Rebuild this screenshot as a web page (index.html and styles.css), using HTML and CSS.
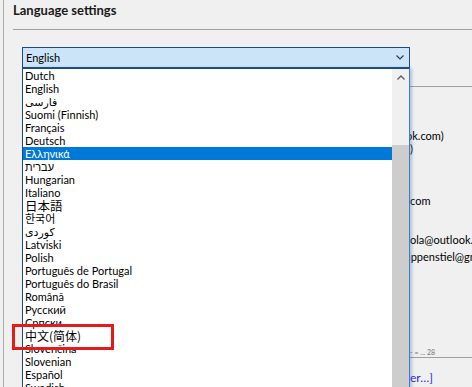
FILE: index.html
```html
<!DOCTYPE html>
<html lang="en">
<head>
    <meta charset="UTF-8">
    <title>Language settings</title>
    <link rel="stylesheet" href="styles.css">
</head>
<body>
<div class="page">
    <div class="group">
        <div class="group-title">Language settings</div>
        <div class="rule"></div>
        <div class="combo">
            <span>English</span>
            <svg class="chev" width="8" height="5" viewBox="0 0 8 5"><path d="M0.5 0.5 L4 4 L7.5 0.5" fill="none" stroke="#333" stroke-width="1.1"/></svg>
        </div>

        <!-- the page behind the open dropdown -->
        <div class="details">
            <div class="rule"></div>
            <div class="detail mail-1">ok.com)</div>
            <div class="detail paren">)</div>
            <div class="detail site">com</div>
            <div class="detail mail-2">ola@outlook.com</div>
            <div class="detail mail-3">ippenstiel@gmail.com</div>
            <div class="detail tiny">- = ... 28</div>
            <div class="rule thin"></div>
            <div class="detail more">er…]</div>
        </div>
    </div>

    <div class="dropdown">
        <ul class="options">
            <li>Dutch</li>
            <li>English</li>
            <li>فارسی</li>
            <li>Suomi (Finnish)</li>
            <li>Français</li>
            <li>Deutsch</li>
            <li class="selected">Ελληνικά</li>
            <li>עברית</li>
            <li>Hungarian</li>
            <li>Italiano</li>
            <li class="jp">日本語</li>
            <li class="kr">한국어</li>
            <li>کوردی</li>
            <li>Latviski</li>
            <li>Polish</li>
            <li>Português de Portugal</li>
            <li>Português do Brasil</li>
            <li>Română</li>
            <li>Русский</li>
            <li>Српски</li>
            <li class="sc">中文(简体)</li>
            <li>Slovenčina</li>
            <li>Slovenian</li>
            <li>Español</li>
            <li>Swedish</li>
        </ul>
        <div class="scrollbar">
            <div class="scroll-btn">
                <svg width="8" height="5" viewBox="0 0 8 5"><path d="M0.5 4.5 L4 1 L7.5 4.5" fill="none" stroke="#606060" stroke-width="1.4"/></svg>
            </div>
            <div class="thumb"></div>
        </div>
    </div>

    <div class="callout"></div>
</div>
</body>
</html>
```
FILE: styles.css
```css
body {
    margin: 0;
    background: #f0f0f0;
    font-family: Lato, "Liberation Sans", "DejaVu Sans", sans-serif;
    color: #000;
    overflow: hidden;
}
.page {
    position: relative;
    height: 387px;
    padding-left: 3px;
    overflow: hidden;
}
.group {
    height: 387px;
    border-left: 1px solid #acacac;
    padding-left: 9px;
}
.group-title {
    font-size: 13px;
    font-weight: bold;
    line-height: 18px;
    padding-top: 1px;
    color: #1a1a1a;
}
.rule {
    height: 1px;
    margin-top: 10px;
    background: #a0a0a0;
}
.combo {
    box-sizing: border-box;
    width: 388px;
    height: 21px;
    margin-top: 17px;
    margin-left: 9px;
    padding: 0 5px 0 3px;
    display: flex;
    align-items: center;
    justify-content: space-between;
    background: #cce4f7;
    border: 1px solid #1d4a7e;
    font-size: 11px;
}

/* content hidden behind the list */
.details {
    margin-left: 393px;
    font-size: 11px;
    line-height: 13px;
    white-space: nowrap;
}
.details .rule {
    margin-top: 18px;
}
.detail {
    padding-left: 4px;
}
.mail-1 { margin-top: 42px; padding-left: 0; }
.site { margin-top: 39px; }
.mail-2 { margin-top: 26px; }
.mail-3 { margin-top: 4px; padding-left: 2px; }
.tiny {
    margin-top: 85px;
    font-size: 7px;
    line-height: 8px;
    color: #777;
}
.details .rule.thin {
    margin-top: 1px;
}
.more {
    margin-top: 13px;
    font-size: 12px;
    line-height: 14px;
    color: #2a2ad0;
}

.dropdown {
    position: absolute;
    z-index: 1;
    left: 22px;
    top: 68px;
    box-sizing: border-box;
    width: 388px;
    height: 330px;
    display: flex;
    background: #fff;
    border: 1px solid #1d4a7e;
    border-right-color: #3d7fc4;
    box-shadow: 2px 0 3px rgba(60, 110, 170, 0.35);
}
.options {
    flex: 1;
    margin: 0;
    padding: 0;
    list-style: none;
    font-size: 11px;
    line-height: 13px;
}
.options li {
    height: 13px;
    padding-left: 2px;
    white-space: nowrap;
}
.options .selected {
    background: #0078d7;
    color: #fff;
}
.options .sc {
    font-family: "Noto Sans CJK SC", sans-serif;
    font-size: 12px;
}
.options .jp {
    font-family: "Noto Sans CJK JP", sans-serif;
    font-size: 12.5px;
}
.options .kr {
    font-family: "Noto Sans CJK KR", sans-serif;
    font-size: 11px;
}
.scrollbar {
    width: 17px;
    display: flex;
    flex-direction: column;
    background: #f0f0f0;
}
.scroll-btn {
    height: 17px;
    display: flex;
    align-items: center;
    justify-content: center;
}
.thumb {
    flex: 1;
    margin-top: 59px;
    background: #cdcdcd;
}

.callout {
    position: absolute;
    z-index: 2;
    left: 12px;
    top: 324px;
    box-sizing: border-box;
    width: 102px;
    height: 26px;
    border: 3px solid #e31b1b;
}
```
